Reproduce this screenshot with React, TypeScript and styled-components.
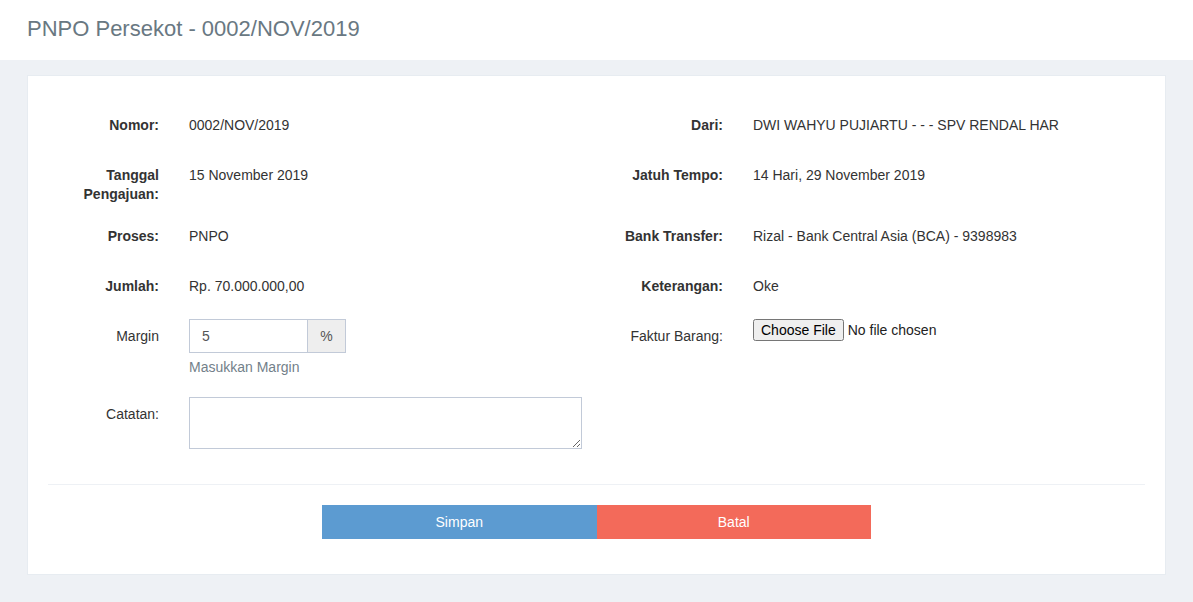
import React from "react";
import styled, { createGlobalStyle } from "styled-components";

const GlobalStyle = createGlobalStyle`
  * { box-sizing: border-box; }
  body {
    margin: 0;
    background: #eef1f5;
    font-family: "Liberation Sans", Arial, sans-serif;
    font-size: 14px;
    color: #333;
  }
`;

const Header = styled.header`
  height: 60px;
  background: #fff;
  display: flex;
  align-items: center;
  padding: 0 27px 3px;
`;

const Title = styled.h1`
  margin: 0;
  font-size: 22px;
  font-weight: 400;
  line-height: 24px;
  color: #697882;
`;

const Main = styled.main`
  padding: 15px 27px;
`;

const Card = styled.section`
  background: #fff;
  border: 1px solid #e7ecf1;
  padding: 32px 20px 35px;
`;

const FormGrid = styled.div`
  display: grid;
  grid-template-columns: 111px 393px 111px 393px;
  column-gap: 30px;
  row-gap: 16px;
  align-items: start;
`;

const Label = styled.div<{ $bold?: boolean }>`
  text-align: right;
  padding-top: 8px;
  margin-bottom: -1px;
  line-height: 19px;
  font-weight: ${(p) => (p.$bold ? 700 : 400)};
  color: #333;
`;

const Value = styled.div`
  padding: 7px 0;
  min-height: 34px;
  line-height: 20px;
  color: #333;
`;

const Field = styled.div``;

const InputGroup = styled.div`
  display: flex;
  width: 157px;
  height: 34px;
`;

const TextInput = styled.input`
  width: 118px;
  height: 34px;
  border: 1px solid #c2cad8;
  border-right: none;
  padding: 6px 12px;
  font-family: inherit;
  font-size: 14px;
  color: #555;
  outline: none;
`;

const Addon = styled.span`
  flex: 1;
  display: flex;
  align-items: center;
  justify-content: center;
  background: #eee;
  border: 1px solid #c2cad8;
  color: #555;
  font-size: 14px;
`;

const Help = styled.div`
  margin: 4px 0 4px;
  line-height: 20px;
  color: #737f8a;
`;

const TextArea = styled.textarea`
  display: block;
  width: 393px;
  height: 52px;
  border: 1px solid #c2cad8;
  padding: 6px 12px;
  font-family: inherit;
  font-size: 14px;
  outline: none;
  resize: both;
`;

const FileInput = styled.input`
  font-family: "Liberation Sans", Arial, sans-serif;
  font-size: 14px;
  color: #222;
`;

const Divider = styled.hr`
  border: 0;
  border-top: 1px solid #eef1f5;
  margin: 35px 0 20px;
`;

const ButtonGroup = styled.div`
  display: flex;
  width: 549px;
  margin: 0 auto;
`;

const Button = styled.button<{ $tone: "blue" | "red" }>`
  flex: 1;
  height: 34px;
  border: none;
  color: #fff;
  font-family: inherit;
  font-size: 14px;
  background: ${(p) => (p.$tone === "blue" ? "#5c9bd1" : "#f36a5a")};
  cursor: pointer;
`;

type Row = { l: string; v: string; r: string; rv: string };

const rows: Row[] = [
  { l: "Nomor:", v: "0002/NOV/2019", r: "Dari:", rv: "DWI WAHYU PUJIARTU - - - SPV RENDAL HAR" },
  { l: "Tanggal Pengajuan:", v: "15 November 2019", r: "Jatuh Tempo:", rv: "14 Hari, 29 November 2019" },
  { l: "Proses:", v: "PNPO", r: "Bank Transfer:", rv: "Rizal - Bank Central Asia (BCA) - 9398983" },
  { l: "Jumlah:", v: "Rp. 70.000.000,00", r: "Keterangan:", rv: "Oke" },
];

export default function App() {
  return (
    <>
      <GlobalStyle />
      <Header>
        <Title>PNPO Persekot - 0002/NOV/2019</Title>
      </Header>
      <Main>
        <Card>
          <FormGrid>
            {rows.map((r) => (
              <React.Fragment key={r.l}>
                <Label $bold>{r.l}</Label>
                <Value>{r.v}</Value>
                <Label $bold>{r.r}</Label>
                <Value>{r.rv}</Value>
              </React.Fragment>
            ))}
            <Label>Margin</Label>
            <Field>
              <InputGroup>
                <TextInput defaultValue="5" />
                <Addon>%</Addon>
              </InputGroup>
              <Help>Masukkan Margin</Help>
            </Field>
            <Label>Faktur Barang:</Label>
            <Field>
              <FileInput type="file" />
            </Field>
            <Label>Catatan:</Label>
            <Field>
              <TextArea />
            </Field>
            <div />
            <div />
          </FormGrid>
          <Divider />
          <ButtonGroup>
            <Button $tone="blue">Simpan</Button>
            <Button $tone="red">Batal</Button>
          </ButtonGroup>
        </Card>
      </Main>
    </>
  );
}
